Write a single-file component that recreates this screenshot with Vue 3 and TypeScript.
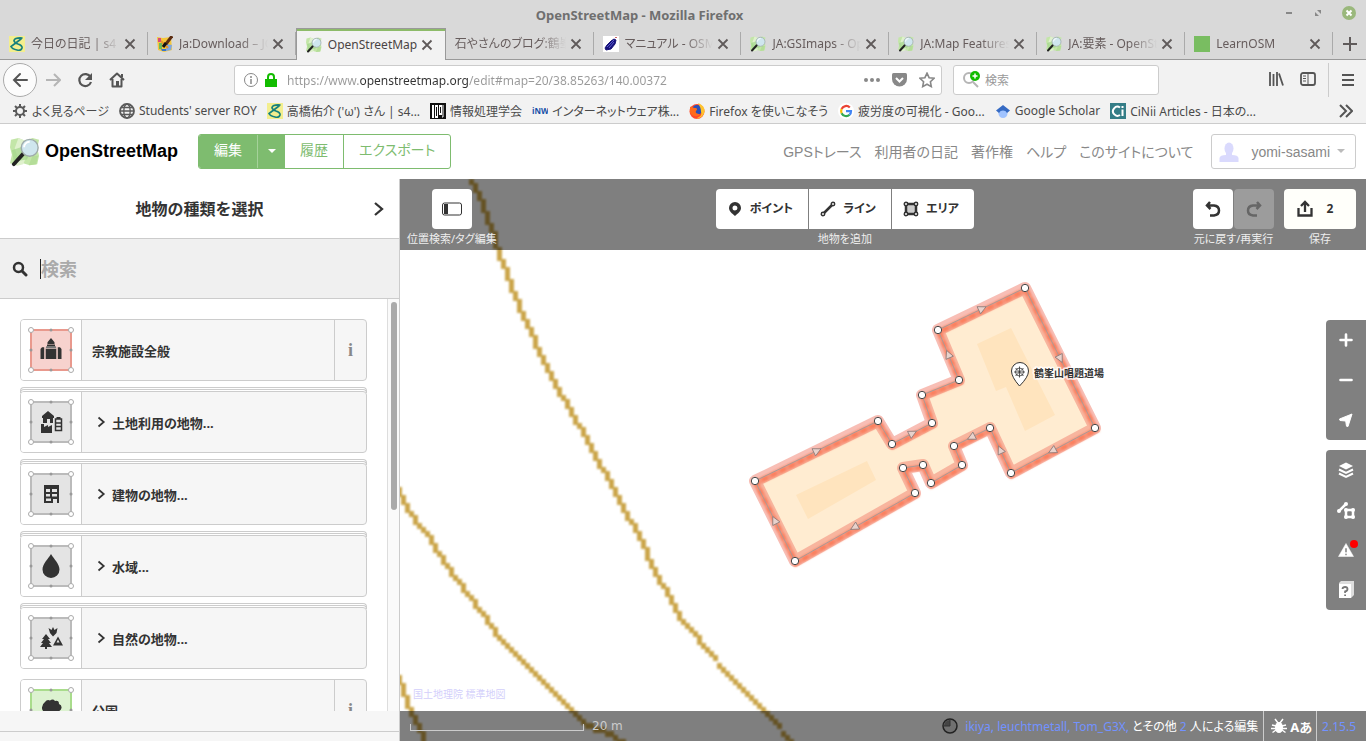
<script setup lang="ts">
import { ref } from 'vue'

interface Tab {
  title: string
  icon: string
  active?: boolean
}
interface Bookmark {
  title: string
  icon: string
}
interface Preset {
  name: string
  icon: string
  tone: string
  category: boolean
}
type Point = [number, number]

const tabs: Tab[] = [
  { title: '今日の日記 | s4 -', icon: 'f-s4' },
  { title: 'Ja:Download – JO', icon: 'f-josm' },
  { title: 'OpenStreetMap', icon: 'f-osm', active: true },
  { title: '石やさんのブログ:鶴峯', icon: '' },
  { title: 'マニュアル - OSM', icon: 'f-osmf' },
  { title: 'JA:GSImaps - Op', icon: 'f-osm' },
  { title: 'JA:Map Features', icon: 'f-osm' },
  { title: 'JA:要素 - OpenSt', icon: 'f-osm' },
  { title: 'LearnOSM', icon: 'f-learn' },
]

const bookmarks: Bookmark[] = [
  { title: 'よく見るページ', icon: 'f-gear' },
  { title: "Students' server ROY", icon: 'f-globe' },
  { title: "高橋佑介 ('ω') さん | s4...", icon: 'f-s4' },
  { title: '情報処理学会', icon: 'f-ipsj' },
  { title: 'インターネットウェア株...', icon: 'f-inw' },
  { title: 'Firefox を使いこなそう', icon: 'f-firefox' },
  { title: '疲労度の可視化 - Goo...', icon: 'f-google' },
  { title: 'Google Scholar', icon: 'f-scholar' },
  { title: 'CiNii Articles - 日本の...', icon: 'f-cinii' },
]

const siteLinks = ['GPSトレース', '利用者の日記', '著作権', 'ヘルプ', 'このサイトについて']

const presets: Preset[] = [
  { name: '宗教施設全般', icon: 'p-religion', tone: 'red', category: false },
  { name: '土地利用の地物...', icon: 'p-landuse', tone: 'grey', category: true },
  { name: '建物の地物...', icon: 'p-building', tone: 'grey', category: true },
  { name: '水域...', icon: 'p-water', tone: 'grey', category: true },
  { name: '自然の地物...', icon: 'p-natural', tone: 'grey', category: true },
  { name: '公園', icon: 'p-park', tone: 'green', category: false },
]

const modes = [
  { label: 'ポイント', icon: 'i-point' },
  { label: 'ライン', icon: 'i-line' },
  { label: 'エリア', icon: 'i-area' },
]

const zoomControls = [
  { label: '拡大', icon: 'c-plus' },
  { label: '縮小', icon: 'c-minus' },
  { label: '現在地', icon: 'c-locate' },
]
const paneControls = [
  { label: '背景', icon: 'c-layers' },
  { label: '地図データ', icon: 'c-data' },
  { label: '問題', icon: 'c-issues' },
  { label: 'ヘルプ', icon: 'c-help' },
]

const url = ref('https://www.openstreetmap.org/edit#map=20/38.85263/140.00372')
const webSearch = ref('')
const featureSearch = ref('')

const outline: Point[] = [
  [1025, 288], [1095, 428], [1011, 473], [990, 428], [954, 446], [962, 465],
  [931, 483], [923, 465], [903, 468], [915, 493], [795, 561], [755, 481],
  [878, 421], [892, 444], [932, 423], [922, 395], [959, 380], [938, 330],
]
const outlinePoints = outline.map((p) => p.join(',')).join(' ')

// Direction arrows sit at the middle of every segment long enough to hold one.
const arrows = outline
  .map((a, i) => {
    const b = outline[(i + 1) % outline.length]
    const dx = b[0] - a[0]
    const dy = b[1] - a[1]
    return {
      x: (a[0] + b[0]) / 2,
      y: (a[1] + b[1]) / 2,
      angle: (Math.atan2(dy, dx) * 180) / Math.PI,
      length: Math.hypot(dx, dy),
    }
  })
  .filter((s) => s.length > 40)

const contours: Point[][] = [
  [[469, 179], [475, 186], [492, 230], [499, 254], [523, 316], [551, 376], [575, 420], [583, 430], [603, 470], [631, 523], [639, 534], [643, 545], [655, 571], [683, 623], [717, 659]],
  [[717, 663], [780, 726]],
  [[781, 731], [793, 742]],
  [[399, 489], [403, 503], [415, 520], [427, 534], [439, 554], [447, 567], [459, 583], [471, 599], [483, 615], [495, 632], [575, 713], [587, 725], [600, 728], [623, 742]],
  [[397, 674], [407, 702], [415, 718], [425, 742]],
]

const CELL = 4

// Raster-like contour: each grid column gets one block spanning the line's rows.
function rasterize(line: Point[]): string {
  const yAt = (x: number): number => {
    for (let i = 1; i < line.length; i++) {
      const [x0, y0] = line[i - 1]
      const [x1, y1] = line[i]
      if (x <= x1) return y0 + ((y1 - y0) * (Math.max(x, x0) - x0)) / (x1 - x0)
    }
    return line[line.length - 1][1]
  }
  let d = ''
  const start = Math.floor((line[0][0] - 1) / CELL) * CELL + 1
  for (let x = start; x < line[line.length - 1][0]; x += CELL) {
    const top = Math.round(yAt(x) / CELL) * CELL
    const bottom = Math.max(top + CELL, Math.round(yAt(x + CELL) / CELL) * CELL)
    d += `M${x} ${top - 1}h${CELL + 1}V${bottom + 1}h-${CELL + 1}z`
  }
  return d
}
const contourPath = contours.map(rasterize).join('')
</script>

<template>
  <svg class="defs" aria-hidden="true">
    <symbol id="f-osm" viewBox="0 0 32 32">
      <path d="M1 3l8-2 7 3 8-3 7 2-2 9 2 8-2 9-8 1-7-2-7 2-7-2 2-9-2-8z" fill="#c3e6a8" />
      <path d="M9 1l7 3-2 10 3 8-3 7-7 2 1-10-3-9z" fill="#dff1cd" />
      <path d="M2 14l12-4 8 6-4 8-14 2z" fill="#a3d68a" opacity=".7" />
      <path d="M24 20l6 0-2 9-8 1z" fill="#b4dd98" />
      <path d="M14 18L4 29" stroke="#222" stroke-width="4" stroke-linecap="round" />
      <circle cx="21" cy="11.500" r="9" fill="#cfe6ee" stroke="#9fabab" stroke-width="1.500" />
      <path d="M15 11a6 6 0 0 1 6-6" stroke="#fff" stroke-width="2" fill="none" />
    </symbol>
    <symbol id="f-s4" viewBox="0 0 16 16">
      <path d="M0 0h16v16H0z" fill="#f3ee8e" />
      <path d="M13 2Q6 1.500 5 4.500q0 2 4 3.500 4.500 1.500 4 4-1 3-5 2-5-1-6-3.500L12 3" fill="none" stroke="#16807c" stroke-width="1.700" stroke-linecap="round" />
    </symbol>
    <symbol id="f-josm" viewBox="0 0 16 16">
      <path d="M0 1l6 1 8-1 1 13-8 2-6-2z" fill="#f5c73a" />
      <path d="M1 2h3v4H1z" fill="#d94b78" /><path d="M2 7h3v6H2z" fill="#6fb85a" />
      <path d="M9 8l6 1-1 5-5 1z" fill="#7fa8e0" />
      <path d="M4 13h5v2H5z" fill="#3b74c9" />
      <path d="M4 5l7 7" stroke="#e9952b" stroke-width="2" />
      <path d="M15 0L9 8" stroke="#5b2c10" stroke-width="3" />
      <path d="M9 7l-3 4" stroke="#111" stroke-width="3" />
    </symbol>
    <symbol id="f-osmf" viewBox="0 0 16 16">
      <path d="M0 0h16v16H0z" fill="#fff" />
      <path d="M11 3l2 1-1 4-4 5-5 1-1-2 2-3 4-4z" fill="#17127a" stroke="#17127a" />
      <path d="M4 11l7-7M6 12l5-6" stroke="#5a5ad0" />
      <path d="M12 1.500h2" stroke="#c66" />
    </symbol>
    <symbol id="f-learn" viewBox="0 0 16 16"><path d="M0 0h16v16H0z" fill="#79bd61" /></symbol>
    <symbol id="f-gear" viewBox="0 0 16 16">
      <g fill="none" stroke="#5a5a5a">
        <circle cx="8" cy="8" r="4" stroke-width="2" />
        <path d="M8 1v3M8 12v3M1 8h3M12 8h3M3 3l2 2M11 11l2 2M13 3l-2 2M5 11l-2 2" stroke-width="2" />
      </g>
    </symbol>
    <symbol id="f-globe" viewBox="0 0 16 16">
      <g fill="none" stroke="#5a5a5a">
        <circle cx="8" cy="8" r="7" stroke-width="1.800" />
        <ellipse cx="8" cy="8" rx="3.200" ry="7" stroke-width="1.300" />
        <path d="M1 8h14M2 4.500h12M2 11.500h12" stroke-width="1.300" />
      </g>
    </symbol>
    <symbol id="f-ipsj" viewBox="0 0 16 16">
      <path d="M0 0h16v16H0z" fill="#111" />
      <path d="M2 2h2v13H2zM5 2h3v13H5zM9 2h3v10H9z" fill="#fff" />
      <path d="M6 4h1v9H6zM10 4h1v6h-1z" fill="#111" />
      <path d="M12 14h1V2" stroke="#fff" fill="none" />
    </symbol>
    <symbol id="f-inw" viewBox="0 0 16 16">
      <text x="0" y="11" font-size="8" font-weight="700" font-family="Open Sans, sans-serif" textAnchor="start" fill="#1550a8">iNW</text>
    </symbol>
    <symbol id="f-firefox" viewBox="0 0 16 16">
      <circle cx="8" cy="8.500" r="7.500" fill="#ff4a2a" />
      <circle cx="8" cy="7" r="5" fill="#2b4fb7" />
      <path d="M9 0c5 2 7 5 6.500 9-1 4-5 7-8.500 6.500 5-2 6-4 5-7 0-3-1-5-3-8.500z" fill="#ffc42e" />
      <path d="M1 4c2-1 3 1 5 1 2 0 3 1 1 3-1 2 1 3 4 3-3 4-9 2-10-2z" fill="#ff6a1a" />
    </symbol>
    <symbol id="f-google" viewBox="0 0 16 16">
      <circle cx="8" cy="8" r="8" fill="#fff" />
      <g fill="none" stroke-width="2.200">
        <path d="M11.800 4.500A5 5 0 0 0 3.600 6" stroke="#ea4335" />
        <path d="M3.600 6a5 5 0 0 0 0 4.200" stroke="#fbbc05" />
        <path d="M3.600 10.200a5 5 0 0 0 8 1.500" stroke="#34a853" />
        <path d="M11.600 11.700A5 5 0 0 0 13 8.200H8" stroke="#4285f4" />
      </g>
    </symbol>
    <symbol id="f-scholar" viewBox="0 0 16 16">
      <circle cx="8" cy="10.500" r="4.500" fill="#a0c3ff" />
      <path d="M8 2l7 5.500-3 2.500a4.500 4.500 0 0 0-8 0L1 7.500z" fill="#356ac3" />
    </symbol>
    <symbol id="f-cinii" viewBox="0 0 16 16">
      <path d="M0 0h16v16H0z" fill="#347d87" />
      <path d="M10 4.500A4.500 4.500 0 1 0 10 12M12.500 6.500v6.500" fill="none" stroke="#fff" stroke-width="2" />
      <path d="M11.500 3h2v2h-2z" fill="#fff" />
    </symbol>
    <symbol id="x-close" viewBox="0 0 12 12"><path d="M1.500 1.500l9 9M10.500 1.500l-9 9" stroke="#5f5a5a" stroke-width="1.800" /></symbol>
    <symbol id="i-chevron" viewBox="0 0 12 16"><path d="M2 2l7 6-7 6" fill="none" stroke="currentColor" stroke-width="2.300" /></symbol>

    <symbol id="p-religion" viewBox="0 0 60 60">
      <path d="M30 18l2.500 3q1.500 1 1 3h-7q-.5-2 1-3zM26 24.500h8V26h-8zM24.700 29h10.600v10H24.700zM19.500 29l1.500-1.700h2.200V39h-3.700zM36.800 27.300H39l1.500 1.700v10h-3.700z" />
      <path d="M25.500 26h9l1 2.500h-11z" fill="#777" />
    </symbol>
    <symbol id="p-landuse" viewBox="0 0 60 60">
      <path d="M27 19l6 5v2h-1v5h-3v-4h-3v4h-4v-5h-1v-2zM20 32h3v3l4-2v2l4-2v8H20z" />
      <path d="M34.500 27h6v11.500h-6zM34.500 31h6M34.500 34.500h6" fill="none" stroke="#333" stroke-width="1.500" />
      <path d="M35.500 25h4v2h-4z" />
    </symbol>
    <symbol id="p-building" viewBox="0 0 60 60">
      <path d="M23 21h15v18h-2v-4h-4v4h-9zM25 25v3h4v-3zM31 25v3h5v-3zM25 30v2.500h4V30zM31 30v2.500h5V30zM25 34.500V37h5v-2.500z" fill-rule="evenodd" />
    </symbol>
    <symbol id="p-water" viewBox="0 0 60 60">
      <path d="M30 18c3 5 8.500 10 8.500 15.500a8.500 8.500 0 0 1-17 0C21.500 28 27 23 30 18z" />
    </symbol>
    <symbol id="p-natural" viewBox="0 0 60 60">
      <path d="M27.500 20l3 2 1.500-3 1.500 3 3-2-1 5-3.500 3.500-3-3.500zM25 26l4 5h-2l3 4h-2l3 4h-5v2h-2v-2h-5l3-4h-2l3-4h-2z" />
      <path d="M37 28.500l5 9H32zM37 31.500l-1.500 3h3z" fill-rule="evenodd" />
    </symbol>
    <symbol id="p-park" viewBox="0 0 60 60">
      <path d="M24 22q2-3 5-1.500 3-2 5 .5 4-1 4 3 3 1 2.500 4t-4 3.500q-2 1.500-4 0l-1 2v8h-3v-8l-2-2q-5 1-5.500-3t3-6.500z" />
    </symbol>

    <symbol id="i-point" viewBox="0 0 20 20">
      <path d="M10 3a6 6 0 0 1 6 6c0 3-3 5.500-6 8-3-2.500-6-5-6-8a6 6 0 0 1 6-6zm0 3.500a2.500 2.500 0 1 0 0 5 2.500 2.500 0 0 0 0-5z" fill-rule="evenodd" fill="#333" />
    </symbol>
    <symbol id="i-line" viewBox="0 0 20 20">
      <path d="M5 15L15 5" stroke="#333" stroke-width="2.500" />
      <g fill="#fff" stroke="#333" stroke-width="1.500"><circle cx="15" cy="5" r="1.700" /><circle cx="5" cy="15" r="1.700" /></g>
    </symbol>
    <symbol id="i-area" viewBox="0 0 20 20">
      <path d="M5 5h10v10H5z" fill="#ccc" stroke="#333" stroke-width="2.500" />
      <g fill="#fff" stroke="#333" stroke-width="1.500"><circle cx="5" cy="5" r="1.700" /><circle cx="15" cy="5" r="1.700" /><circle cx="5" cy="15" r="1.700" /><circle cx="15" cy="15" r="1.700" /></g>
    </symbol>

    <symbol id="c-plus" viewBox="0 0 20 20"><path d="M10 4.500v11M4.500 10h11" stroke="#fff" stroke-width="2.600" stroke-linecap="round" /></symbol>
    <symbol id="c-minus" viewBox="0 0 20 20"><path d="M4.500 10h11" stroke="#fff" stroke-width="2.600" stroke-linecap="round" /></symbol>
    <symbol id="c-locate" viewBox="0 0 20 20"><path d="M16 4l-4 12.500-1.500-.3-.8-5.200-5.700-.5L3.500 9z" fill="#fff" stroke="#fff" stroke-linejoin="round" /></symbol>
    <symbol id="c-layers" viewBox="0 0 20 20">
      <path d="M10 2.500l7 3.500-7 3.500L3 6z" fill="#fff" />
      <path d="M3 9.500l7 3.500 7-3.500M3 13.500l7 3.500 7-3.500" fill="none" stroke="#fff" stroke-width="2" />
    </symbol>
    <symbol id="c-data" viewBox="0 0 20 20">
      <path d="M3 11L10 4" stroke="#fff" stroke-width="2.500" />
      <circle cx="3" cy="11" r="2" fill="#fff" /><circle cx="10" cy="4" r="2" fill="#fff" />
      <path d="M10 10h7v7h-7z" fill="none" stroke="#fff" stroke-width="2.500" />
      <g fill="#fff"><circle cx="10" cy="10" r="2" /><circle cx="17" cy="10" r="2" /><circle cx="10" cy="17" r="2" /><circle cx="17" cy="17" r="2" /></g>
    </symbol>
    <symbol id="c-issues" viewBox="0 0 20 20">
      <path d="M10 3.500l7.500 13h-15zM9 8v4.500h2V8zM9 13.500v1.800h2v-1.800z" fill="#fff" fill-rule="evenodd" stroke="#fff" stroke-width=".5" />
    </symbol>
    <symbol id="c-help" viewBox="0 0 20 20">
      <path d="M3 3l2-2h13v14l-3 3V4H3z" fill="#ddd" /><path d="M3 4h12v14H3z" fill="#fff" />
      <path d="M6.500 9q.2-2 2.600-2t2.400 2-2.400 2.500v1.500M9.100 14.500v1.500" fill="none" stroke="#777" stroke-width="1.800" />
    </symbol>
  </svg>

  <div class="window">
    <header class="titlebar">
      <div class="title">OpenStreetMap - Mozilla Firefox</div>
      <div class="window-buttons">
        <button aria-label="最小化"><svg width="8" height="8"><path d="M1 4h6" stroke="#888" stroke-width="2" /></svg></button>
        <button aria-label="最大化"><svg width="8" height="8"><path d="M3 1h4v4zM1 3v4h4z" fill="#888" /></svg></button>
        <button aria-label="閉じる"><svg width="14" height="14"><circle cx="7" cy="7" r="7" fill="#9ab87c" /><path d="M4.500 4.500l5 5M9.500 4.500l-5 5" stroke="#fff" stroke-width="2" /></svg></button>
      </div>
    </header>

    <nav class="tabs" aria-label="タブ">
      <div v-for="tab in tabs" :key="tab.title" class="tab" :class="{ active: tab.active }">
        <svg v-if="tab.icon" class="favicon"><use :href="'#' + tab.icon" /></svg>
        <span class="tab-title">{{ tab.title }}</span>
        <button class="tab-close" aria-label="タブを閉じる"><svg width="12" height="12"><use href="#x-close" /></svg></button>
      </div>
      <button class="new-tab" aria-label="新しいタブ"><svg width="14" height="14"><path d="M7 0v14M0 7h14" stroke="#5f5a5a" stroke-width="2" /></svg></button>
    </nav>

    <div class="navbar">
      <button class="back" aria-label="戻る"><svg width="16" height="16"><path d="M15 8H2M8 2L2 8l6 6" fill="none" stroke="#555" stroke-width="2" stroke-linecap="round" /></svg></button>
      <button class="tool" aria-label="進む"><svg width="16" height="16"><path d="M1 8h13M9 2l6 6-6 6" fill="none" stroke="#b5b5b5" stroke-width="2" /></svg></button>
      <button class="tool" aria-label="再読み込み"><svg width="16" height="16"><path d="M13.500 5A6 6 0 1 0 14 10" fill="none" stroke="#555" stroke-width="2.200" /><path d="M15 1v7H8z" fill="#555" /></svg></button>
      <button class="tool" aria-label="ホーム"><svg width="16" height="16"><path d="M1 8l7-6.500L15 8M3.500 7v7.500h9V7M13 2v3" fill="none" stroke="#555" stroke-width="2" stroke-linejoin="round" /><path d="M7 9h3v5H7z" fill="#555" /></svg></button>
      <div class="urlbar">
        <svg width="16" height="16"><circle cx="8" cy="8" r="6.500" fill="none" stroke="#888" /><path d="M8 7v5M8 4v2" stroke="#888" stroke-width="1.500" /></svg>
        <svg width="14" height="16"><path d="M1 7h12v8H1z" fill="#12bc00" /><path d="M4 8V5a3 3 0 0 1 6 0v3" fill="none" stroke="#12bc00" stroke-width="2" /></svg>
        <input v-model="url" class="url-input" aria-label="アドレス" />
        <svg width="18" height="16"><g fill="#888"><circle cx="3" cy="8" r="2" /><circle cx="9" cy="8" r="2" /><circle cx="15" cy="8" r="2" /></g></svg>
        <svg width="18" height="16"><path d="M1 2.500Q1 1 2.500 1h12Q16 1 16 2.500V7a7.500 7.500 0 0 1-15 0z" fill="#888" /><path d="M5 6l3.500 3.500L12 6" fill="none" stroke="#fff" stroke-width="2" /></svg>
        <svg width="16" height="16"><path d="M8 1.200l2.100 4.500 4.900.6-3.600 3.400.9 4.900L8 12.200l-4.300 2.400.9-4.900L1 6.300l4.900-.6z" fill="none" stroke="#888" stroke-width="1.600" /></svg>
      </div>
      <div class="searchbar">
        <svg width="20" height="18"><circle cx="7" cy="7" r="5" fill="none" stroke="#b5b5b5" stroke-width="2" /><path d="M11 11l5 5" stroke="#b5b5b5" stroke-width="2" /><circle cx="13" cy="5" r="5" fill="#12bc00" /><path d="M13 2.500v5M10.500 5h5" stroke="#fff" stroke-width="1.500" /></svg>
        <input v-model="webSearch" placeholder="検索" aria-label="ウェブ検索" />
      </div>
      <div class="nav-right">
        <button class="tool" aria-label="ライブラリー"><svg width="16" height="16"><path d="M2 1v14M5.500 3v12M9 1v14M11 2.500l4 12" stroke="#555" stroke-width="1.800" /></svg></button>
        <button class="tool" aria-label="サイドバー"><svg width="16" height="16"><rect x="1" y="2" width="14" height="12" rx="2" fill="none" stroke="#555" stroke-width="1.800" /><path d="M8 2v12M3 5h3M3 7.500h3M3 10h3" stroke="#555" /></svg></button>
        <button class="tool menu" aria-label="メニュー"><svg width="14" height="14"><path d="M1 2h12M1 7h12M1 12h12" stroke="#555" stroke-width="2" /></svg></button>
      </div>
    </div>

    <nav class="bookmarks" aria-label="ブックマーク">
      <a v-for="b in bookmarks" :key="b.title" href="#"><svg class="favicon"><use :href="'#' + b.icon" /></svg>{{ b.title }}</a>
      <button class="more" aria-label="その他のブックマーク"><svg width="14" height="14"><path d="M1 1l6 6-6 6M7 1l6 6-6 6" fill="none" stroke="#555" stroke-width="2" /></svg></button>
    </nav>

    <header class="site-header">
      <a class="brand" href="#"><svg width="30" height="30"><use href="#f-osm" /></svg><span>OpenStreetMap</span></a>
      <div class="site-actions">
        <a class="edit" href="#">編集</a>
        <button class="edit-menu" aria-label="エディタを選択"><svg width="8" height="5"><path d="M0 0h8L4 4z" fill="#fff" /></svg></button>
        <a href="#">履歴</a>
        <a href="#">エクスポート</a>
      </div>
      <nav class="site-links">
        <a v-for="link in siteLinks" :key="link" href="#">{{ link }}</a>
      </nav>
      <button class="user">
        <svg width="20" height="20"><ellipse cx="10" cy="6.500" rx="4.500" ry="6" fill="#dadafd" /><path d="M7 11h6v2q6 0 6.500 3v4H.5v-4Q1 13 7 13z" fill="#dadafd" /></svg>
        <span>yomi-sasami</span>
        <svg width="8" height="5"><path d="M0 0h8L4 4z" fill="#bbb" /></svg>
      </button>
    </header>

    <main class="editor">
      <aside class="sidebar">
        <div class="side-header">
          <h2>地物の種類を選択</h2>
          <button aria-label="続ける"><svg width="12" height="16"><use href="#i-chevron" /></svg></button>
        </div>
        <label class="side-search">
          <svg width="16" height="16"><circle cx="6.500" cy="6.500" r="4.500" fill="none" stroke="#333" stroke-width="2.500" /><path d="M10 10l4 4" stroke="#333" stroke-width="3" stroke-linecap="round" /></svg>
          <span class="caret"></span>
          <input v-model="featureSearch" placeholder="検索" aria-label="地物を検索" />
        </label>
        <div class="side-body">
          <div class="preset-list">
            <div v-for="p in presets" :key="p.name" class="preset" :class="{ category: p.category }">
              <button class="preset-main">
                <svg class="preset-icon" :class="p.tone" width="60" height="60">
                  <rect class="frame" x="10" y="10" width="40" height="40" stroke-width="2" />
                  <g class="mid"><circle cx="30" cy="10" r="1.500" /><circle cx="30" cy="50" r="1.500" /><circle cx="10" cy="30" r="1.500" /><circle cx="50" cy="30" r="1.500" /></g>
                  <g class="corner"><circle cx="10" cy="10" r="2.500" /><circle cx="50" cy="10" r="2.500" /><circle cx="10" cy="50" r="2.500" /><circle cx="50" cy="50" r="2.500" /></g>
                  <use :href="'#' + p.icon" />
                </svg>
                <span class="preset-label">
                  <svg v-if="p.category" width="9" height="12"><use href="#i-chevron" /></svg>
                  {{ p.name }}
                </span>
              </button>
              <button v-if="!p.category" class="info" aria-label="情報">i</button>
            </div>
          </div>
          <div class="scroll-track"><div class="scroll-thumb"></div></div>
        </div>
        <div class="side-footer"></div>
      </aside>

      <section class="map">
        <svg class="canvas" viewBox="400 179 966 562" preserveAspectRatio="xMinYMin slice">
          <defs><filter id="soft"><feGaussianBlur stdDeviation="0.9" /></filter></defs>
          <path :d="contourPath" fill="#cba548" filter="url(#soft)" />
          <polygon :points="outlinePoints" fill="#ffecd1" />
          <polygon :points="outlinePoints" class="tile-edge" transform="translate(1 2)" filter="url(#soft)" />
          <path d="M977 344l34-16 44 87-30 16-19-44-10 4zM796 495l71-34 9 19-68 39z" fill="#ffe4be" />
          <polygon :points="outlinePoints" class="halo" />
          <polygon :points="outlinePoints" class="tile-dash" transform="translate(1 2)" filter="url(#soft)" />
          <polygon :points="outlinePoints" fill="none" stroke="#a99a96" />
          <path v-for="(a, i) in arrows" :key="i" d="M5 0L-3 4V-4z" :transform="`translate(${a.x} ${a.y}) rotate(${a.angle})`" fill="#e8d2cc" stroke="#8d7b78" stroke-width=".8" />
          <circle v-for="p in outline" :key="p.join()" :cx="p[0]" :cy="p[1]" r="3.700" fill="#fff" stroke="#444" />
          <path d="M1019.500 386q-8-9-8-15a8 8 0 0 1 17 0q0 6-9 15z" fill="#fff" stroke="#333" />
          <g fill="none" stroke="#333" stroke-width=".8"><circle cx="1019.500" cy="372" r="4" /><path d="M1014 372h11M1019.500 366.500v11M1015.500 368l8 8M1023.500 368l-8 8" /></g>
          <text class="pin-label" x="1034" y="377">鶴峯山唱題道場</text>
        </svg>

        <div class="toolbar">
          <div class="group">
            <div class="buttons"><button class="square" aria-label="サイドバー切替"><svg width="20" height="14"><rect x=".5" y="1" width="19" height="12" rx="2" fill="none" stroke="#333" /><path d="M2 2h4v10H2z" fill="#333" /></svg></button></div>
            <span>位置検索/タグ編集</span>
          </div>
          <div class="group">
            <div class="buttons modes"><button v-for="m in modes" :key="m.label"><svg width="20" height="20"><use :href="'#' + m.icon" /></svg>{{ m.label }}</button></div>
            <span>地物を追加</span>
          </div>
          <div class="right-groups">
            <div class="group">
              <div class="buttons">
                <button class="square" aria-label="元に戻す"><svg width="20" height="20"><path d="M7 3L4 6.500 7.500 10M4.500 6.500H11q5 .5 5 5t-5 5H7" fill="none" stroke="#333" stroke-width="2.500" /></svg></button>
                <button class="square redo" disabled aria-label="再実行"><svg width="20" height="20"><path d="M13 3l3 3.500-3.500 3.500M15.500 6.500H9q-5 .5-5 5t5 5h4" fill="none" stroke="#666" stroke-width="2.500" /></svg></button>
              </div>
              <span>元に戻す/再実行</span>
            </div>
            <div class="group">
              <div class="buttons"><button class="save"><svg width="20" height="20"><path d="M3.500 9v7.500h13V9M10 13V4M6 7l4-4 4 4" fill="none" stroke="#333" stroke-width="2.300" /></svg>2</button></div>
              <span>保存</span>
            </div>
          </div>
        </div>

        <div class="controls">
          <div class="control-group"><button v-for="c in zoomControls" :key="c.label" :aria-label="c.label"><svg width="20" height="20"><use :href="'#' + c.icon" /></svg></button></div>
          <div class="control-group"><button v-for="c in paneControls" :key="c.label" :aria-label="c.label"><svg width="20" height="20"><use :href="'#' + c.icon" /></svg><i v-if="c.icon === 'c-issues'" class="dot"></i></button></div>
        </div>

        <a class="attribution" href="#">国土地理院 標準地図</a>

        <footer class="status">
          <div class="scale"></div>
          <span class="scale-text">20 m</span>
          <div class="contributors">
            <svg width="16" height="16"><circle cx="8" cy="8" r="7" fill="#707070" stroke="#222" stroke-width="1.500" /><path d="M8 8V2a6 6 0 0 0-6 6z" fill="#444" /><path d="M8 8V2M8 8H2" stroke="#333" /></svg>
            <span><a href="#">ikiya</a><a href="#">, leuchtmetall</a><a href="#">, Tom_G3X</a><a href="#">,</a> とその他 <a href="#">2</a> 人による編集</span>
          </div>
          <div class="tools">
            <svg width="16" height="16"><ellipse cx="8" cy="9.500" rx="4" ry="5.500" fill="#fff" /><path d="M4 1l3 4h2l3-4M1 7l4 1M15 7l-4 1M0 10.500h16M1.500 14.500L5 12M14.500 14.500L11 12" fill="none" stroke="#fff" stroke-width="1.500" /></svg>
            <b>Aあ</b>
          </div>
          <a class="version" href="#">2.15.5</a>
        </footer>
      </section>
    </main>
  </div>
</template>

<style>
html, body { margin: 0; height: 100%; overflow: hidden; }
#app { height: 100%; }
</style>

<style scoped>
.defs { position: absolute; width: 0; height: 0; }
.window { display: flex; flex-direction: column; height: 100vh; font-family: "Noto Sans", "Noto Sans CJK JP", sans-serif; font-size: 12px; font-feature-settings: "palt"; color: #4a4a4a; background: #fff; }
* { box-sizing: border-box; }
button { font: inherit; font-feature-settings: inherit; color: inherit; background: none; border: 0; padding: 0; margin: 0; display: flex; align-items: center; justify-content: center; cursor: pointer; }
input { font: inherit; border: 0; padding: 0; background: none; outline: 0; min-width: 0; }
a { color: inherit; text-decoration: none; }
svg { flex: none; display: block; }
.favicon { width: 16px; height: 16px; }

.titlebar { display: flex; align-items: center; height: 28px; background: #d9d9d9; }
.title { flex: 1; text-align: center; font-size: 13px; font-weight: 700; color: #6f6f6f; padding: 2px 0 0; }
.window-buttons { display: flex; align-items: center; justify-content: space-between; width: 87px; padding: 0 10px 2px 6px; }

.tabs { display: flex; height: 32px; background: #d9d9d9; border-bottom: 1px solid #999; }
.tab { position: relative; flex: 1 1 0; min-width: 0; display: flex; align-items: center; gap: 6px; padding: 0 12px 0 9px; color: #665c5c; }
.tab::after { content: ""; position: absolute; right: 0; top: 4px; bottom: 4px; border-right: 1px solid #aaa; }
.tab.active { height: 32px; background: #f2f2f2; border: 1px solid #999; border-bottom: 0; box-shadow: inset 0 2px #8dbb69; color: #4a4444; }
.tab.active::after { display: none; }
.tab-title { flex: 1; min-width: 0; overflow: hidden; white-space: nowrap; line-height: 18px; mask-image: linear-gradient(to left, transparent, #000 28px); }
.tab.active .tab-title { mask-image: none; }
.tab-close { margin-left: -2px; }
.new-tab { width: 33px; }

.navbar { display: flex; align-items: center; height: 40px; padding: 0 10px 0 3px; background: #f2f2f2; }
.back { width: 34px; height: 34px; border: 1px solid #aaa; border-radius: 50%; background: #fcfcfc; }
.tool { width: 32px; height: 32px; }
.urlbar, .searchbar { display: flex; align-items: center; height: 30px; background: #fff; border: 1px solid #ccc; border-radius: 3px; }
.urlbar { flex: 1; margin-left: 101px; padding: 0 6px 0 8px; gap: 5px; }
.urlbar svg:nth-last-child(-n+3) { margin-left: 5px; }
.url-input { flex: 1; margin-left: 4px; height: 20px; color: transparent; background: linear-gradient(90deg, #999 72px, #333 72px, #333 181px, #999 181px); background-clip: text; -webkit-background-clip: text; }
.searchbar { width: 206px; margin-left: 11px; padding: 0 8px; gap: 3px; }
.searchbar input { flex: 1; }
.searchbar input::placeholder { color: #999; opacity: 1; }
.nav-right { display: flex; margin-left: 101px; }
.menu { width: 38px; height: 34px; margin-left: 4px; margin-right: -10px; border-left: 1px solid #ccc; }

.bookmarks { display: flex; align-items: center; gap: 10px; height: 24px; padding: 0 13px 2px 12px; background: #f2f2f2; border-bottom: 1px solid #ccc; white-space: nowrap; }
.bookmarks a { display: flex; align-items: center; gap: 4px; }
.more { margin-left: auto; }

.site-header { display: flex; align-items: center; flex: none; height: 55px; padding: 0 10px; font-family: "Liberation Sans", "Noto Sans CJK JP", sans-serif; font-size: 14px; color: #888; }
.brand { display: flex; align-items: center; gap: 5px; font-size: 18px; font-weight: 700; color: #000; }
.site-actions { display: flex; height: 35px; margin-left: 20px; border: 1px solid #7ebc6f; border-radius: 3px; color: #7ebc6f; overflow: hidden; }
.site-actions a { padding: 0 15px; line-height: 31px; border-left: 1px solid #7ebc6f; }
.site-actions .edit { background: #7ebc6f; color: #fff; border-left: 0; }
.site-actions .edit-menu { width: 28px; background: #7ebc6f; border-left: 1px solid #a5d29a; }
.site-actions .edit-menu + a { border-left: 0; }
.site-links { display: flex; gap: 13px; margin-left: auto; padding-bottom: 2px; }
.user { height: 35px; margin-left: 18px; padding: 0 10px 0 7px; border: 1px solid #ccc; border-radius: 3px; }
.user span { margin: 0 7px 0 12px; }

.editor { flex: 1; min-height: 0; display: flex; color: #333; }
.sidebar { flex: 0 0 400px; display: flex; flex-direction: column; border-right: 1px solid #ccc; background: #fff; }
.side-header { position: relative; flex: none; height: 60px; display: flex; align-items: center; justify-content: center; border-bottom: 1px solid #ccc; }
.side-header h2 { margin: 0; font-size: 16px; line-height: 24px; font-weight: 700; font-feature-settings: normal; }
.side-header button { position: absolute; right: 14px; top: 22px; }
.side-search { flex: none; height: 60px; display: flex; align-items: center; padding: 0 12px; background: #f0f0f0; border-bottom: 1px solid #ccc; }
.caret { width: 1px; height: 20px; margin-left: 12px; background: #222; }
.side-search input { flex: 1; font-size: 18px; font-weight: 700; font-feature-settings: normal; }
.side-search input::placeholder { color: #aaa; opacity: 1; }
.side-body { flex: 1; min-height: 0; display: flex; overflow: hidden; }
.preset-list { flex: 1; display: flex; flex-direction: column; gap: 10px; padding: 20px; }
.preset { position: relative; flex: none; height: 62px; display: flex; border: 1px solid #ccc; border-radius: 4px; background: #f6f6f6; }
.preset.category::before, .preset.category::after { content: ""; position: absolute; left: -1px; right: -1px; height: 5px; border: 1px solid #ccc; border-bottom: 0; border-radius: 4px 4px 0 0; }
.preset.category::before { top: -5px; }
.preset.category::after { top: -3px; height: 3px; }
.preset-main { flex: 1; justify-content: flex-start; }
.preset-icon { background: #fff; border-right: 1px solid #ccc; box-sizing: content-box; border-radius: 3px 0 0 3px; fill: #333; }
.frame { fill: #e4e4e4; stroke: #bbb; }
.red .frame { fill: #f7d2ce; stroke: #e9998d; }
.green .frame { fill: #dcf2d0; stroke: #a9dc8c; }
.mid { fill: #999; }
.corner { fill: #fff; stroke: #aaa; }
.preset-label { display: flex; align-items: center; gap: 6px; padding-left: 10px; font-size: 13px; font-weight: 700; }
.category .preset-label { padding-left: 15px; }
.info { width: 32px; border-left: 1px solid #ccc; font-family: "Liberation Serif", serif; font-size: 18px; font-weight: 700; color: #888; }
.scroll-track { width: 12px; padding: 3px; border-left: 1px solid #ddd; background: #fafafa; }
.scroll-thumb { width: 6px; height: 208px; border-radius: 3px; background: #aaa; }
.side-footer { flex: none; height: 30px; background: #f6f6f6; }
.side-footer::before { content: ""; display: block; height: 20px; border-bottom: 1px solid #ccc; }

.map { position: relative; flex: 1; min-width: 0; overflow: hidden; background: #fff; }
.canvas { position: absolute; inset: 0; width: 100%; height: 100%; }
.halo { fill: none; stroke: rgba(242, 125, 108, 0.5); stroke-width: 12; stroke-linejoin: round; }
.tile-edge { fill: none; stroke: #ffa684; stroke-width: 6; }
.tile-dash { fill: none; stroke: rgba(255, 100, 55, 0.4); stroke-width: 4; stroke-dasharray: 6 4; }
.pin-label { font-size: 10px; font-weight: 700; fill: #333; stroke: #fff; stroke-width: 3px; stroke-opacity: 0.8; paint-order: stroke; stroke-linejoin: round; }

.toolbar { position: absolute; inset: 0 0 auto; display: flex; justify-content: space-between; height: 71px; padding: 10px 10px 0 7px; background: rgba(0, 0, 0, 0.5); }
.group { display: flex; flex-direction: column; align-items: center; gap: 2px; color: #eee; font-size: 11px; line-height: 16px; }
.right-groups { display: flex; gap: 10px; }
.buttons { display: flex; gap: 1px; color: #333; font-size: 12px; font-weight: 700; }
.buttons button { height: 40px; background: #fff; border-radius: 4px; }
.buttons .square { width: 40px; }
.buttons .redo { background: #9c9c9c; }
.buttons.modes button { gap: 5px; padding: 0 15px 0 9px; border-radius: 0; }
.buttons.modes button:first-child { border-radius: 4px 0 0 4px; }
.buttons.modes button:last-child { border-radius: 0 4px 4px 0; }
.buttons .save { width: 72px; gap: 12px; padding-right: 12px; background: #fffffa; }

.controls { position: absolute; right: 0; top: 141px; display: flex; flex-direction: column; gap: 10px; }
.control-group { border-radius: 4px 0 0 4px; background: #808080; }
.control-group button { position: relative; width: 40px; height: 40px; }
.dot { position: absolute; right: 8px; top: 10px; width: 8px; height: 8px; border-radius: 50%; background: #f00; }

.attribution { position: absolute; left: 13px; bottom: 39px; font-size: 10px; line-height: 16px; color: #d3cffb; }
.status { position: absolute; inset: auto 0 0; display: flex; align-items: center; height: 30px; padding-left: 10px; background: rgba(0, 0, 0, 0.5); color: #fff; }
.scale { width: 174px; height: 7px; margin-top: 2px; border: 1px solid #ccc; border-top: 0; }
.scale-text { margin-left: 8px; font-family: "DejaVu Sans", sans-serif; color: #ccc; }
.contributors { display: flex; align-items: center; gap: 7px; margin-left: auto; padding-right: 5px; }
.status a { color: #7292ff; }
.tools { display: flex; align-items: center; gap: 3px; height: 30px; padding: 0 4px 0 7px; border: 1px solid #ccc; border-width: 0 1px; font-size: 13px; }
.version { padding: 0 10px 0 5px; }
</style>
